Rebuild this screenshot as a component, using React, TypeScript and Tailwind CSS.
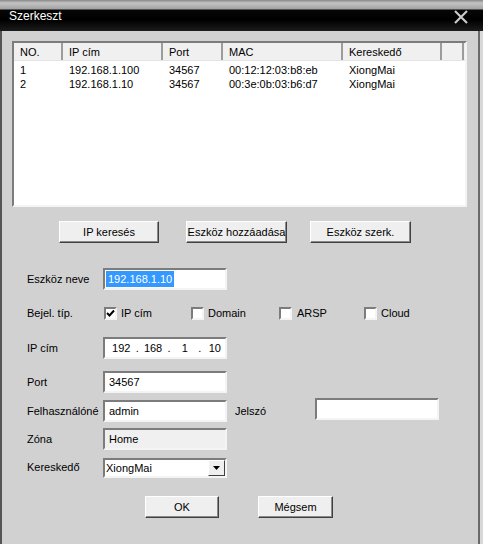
import React from "react";

const sunken =
  "border-2 border-t-[#7c7c7c] border-l-[#7c7c7c] border-b-[#f4f4f4] border-r-[#f4f4f4]";

function Btn({ label, w, ml }: { label: string; w: string; ml: string }) {
  return (
    <div
      className={`${w} ${ml} h-[22px] flex items-center justify-center bg-[#efefef] border border-t-white border-l-white border-b-[#404040] border-r-[#404040] shadow-[inset_-1px_-1px_0_#8a8a8a]`}
    >
      {label}
    </div>
  );
}

function Check({ checked }: { checked?: boolean }) {
  return (
    <div className={`w-[13px] h-[13px] bg-white ${sunken} flex items-center justify-center`}>
      {checked && (
        <svg width="9" height="9" viewBox="0 0 9 9">
          <polyline points="1,4 3.5,6.5 8,1.5" fill="none" stroke="#000" strokeWidth="2" />
        </svg>
      )}
    </div>
  );
}

const cols = [
  { t: "NO.", w: "w-[49px]" },
  { t: "IP cím", w: "w-[100px]" },
  { t: "Port", w: "w-[60px]" },
  { t: "MAC", w: "w-[120px]" },
  { t: "Kereskedő", w: "w-[99px]" },
];

const rows = [
  ["1", "192.168.1.100", "34567", "00:12:12:03:b8:eb", "XiongMai"],
  ["2", "192.168.1.10", "34567", "00:3e:0b:03:b6:d7", "XiongMai"],
];

export default function App() {
  return (
    <div className="w-[483px] h-[544px] overflow-hidden bg-[#d8d8d8] text-[11px] leading-[14px] text-black font-['Liberation_Sans',Arial,sans-serif]">
      {/* Title bar */}
      <div className="h-[31px] flex items-start justify-between bg-[linear-gradient(to_bottom,#8a8a8a_0px,#c4c4c4_3px,#a2a2a2_9px,#060606_10px,#000000_20px,#1c1c1c_31px)]">
        <span className="pl-[9px] pt-[10px] text-white text-[12px] leading-[12px]">Szerkeszt</span>
        <svg width="14" height="14" viewBox="0 0 14 14" className="mt-[10px] mr-[15px]">
          <path d="M1 1 L13 13 M13 1 L1 13" stroke="#c9c9c9" strokeWidth="2.2" />
        </svg>
      </div>

      {/* Body */}
      <div className="flex h-[513px]">
        <div className="w-[480px] h-full bg-[#d1d1d1] border-l-2 border-r-2 border-l-[#555555] border-r-[#6a6a6a] flex flex-col">
          {/* List */}
          <div className={`ml-[10px] mt-[10px] w-[455px] h-[166px] bg-white ${sunken} flex flex-col`}>
            <div className="h-[18px] flex bg-[#f0f0f0] border-b border-b-[#e4e4e4]">
              {cols.map((c) => (
                <div
                  key={c.t}
                  className={`${c.w} h-full flex items-center pl-[6px] border-r-2 border-r-[#9c9c9c]`}
                >
                  {c.t}
                </div>
              ))}
              <div className="w-[22px] h-full border-r-2 border-r-[#9c9c9c]" />
            </div>
            <div className="pt-[2px]">
              {rows.map((r) => (
                <div key={r[0]} className="h-[14px] flex">
                  {r.map((v, i) => (
                    <div key={i} className={`${cols[i].w} pl-[6px] ${i === 0 ? "pl-[5px]" : ""}`}>
                      {v}
                    </div>
                  ))}
                </div>
              ))}
            </div>
          </div>

          {/* Buttons */}
          <div className="flex mt-[14px]">
            <Btn label="IP keresés" w="w-[100px]" ml="ml-[57px]" />
            <Btn label="Eszköz hozzáadása" w="w-[101px]" ml="ml-[27px]" />
            <Btn label="Eszköz szerk." w="w-[101px]" ml="ml-[23px]" />
          </div>

          {/* Form */}
          <div className="pl-[25px] flex flex-col">
            <div className="mt-[25px] h-[22px] flex items-center">
              <div className="w-[76px]">Eszköz neve</div>
              <div className={`w-[124px] h-[22px] bg-white ${sunken} flex items-center pl-[1px]`}>
                <span className="bg-[#3399ff] text-white px-[2px] leading-[16px]">192.168.1.10</span>
              </div>
            </div>

            <div className="mt-[12px] h-[22px] flex items-center">
              <div className="w-[77px]">Bejel. típ.</div>
              <div className="w-[87px] flex items-center gap-[4px]">
                <Check checked />
                <span>IP cím</span>
              </div>
              <div className="w-[88px] flex items-center gap-[4px]">
                <Check />
                <span>Domain</span>
              </div>
              <div className="w-[85px] flex items-center gap-[5px]">
                <Check />
                <span>ARSP</span>
              </div>
              <div className="flex items-center gap-[4px]">
                <Check />
                <span>Cloud</span>
              </div>
            </div>

            <div className="mt-[13px] h-[22px] flex items-center">
              <div className="w-[76px]">IP cím</div>
              <div className={`w-[124px] h-[22px] bg-white ${sunken} flex items-center pl-[6px]`}>
                <span className="w-[22px] text-center">192</span>
                <span className="w-[12px] text-center">.</span>
                <span className="w-[22px] text-center">168</span>
                <span className="w-[12px] text-center">.</span>
                <span className="w-[22px] text-center">1</span>
                <span className="w-[10px] text-center">.</span>
                <span className="w-[22px] text-center">10</span>
              </div>
            </div>

            <div className="mt-[12px] h-[22px] flex items-center">
              <div className="w-[76px]">Port</div>
              <div className={`w-[124px] h-[22px] bg-white ${sunken} flex items-center pl-[4px]`}>34567</div>
            </div>

            <div className="mt-[7px] h-[22px] flex items-start">
              <div className="w-[76px] self-center">Felhasználóné</div>
              <div className={`w-[124px] h-[22px] bg-white ${sunken} flex items-center pl-[4px]`}>admin</div>
              <div className="ml-[8px] w-[80px] self-center">Jelszó</div>
              <div className={`w-[124px] h-[22px] -mt-[2px] bg-white ${sunken}`} />
            </div>

            <div className="mt-[6px] h-[22px] flex items-center">
              <div className="w-[76px]">Zóna</div>
              <div className={`w-[124px] h-[22px] bg-[#f0f0f0] ${sunken} flex items-center pl-[4px]`}>Home</div>
            </div>

            <div className="mt-[8px] h-[20px] flex items-center">
              <div className="w-[76px] -mt-[3px]">Kereskedő</div>
              <div className={`w-[124px] h-[20px] bg-white ${sunken} flex items-center justify-between`}>
                <span className="pl-[1px]">XiongMai</span>
                <div className="w-[17px] h-[16px] bg-[#efefef] border border-t-white border-l-white border-b-[#404040] border-r-[#404040] flex items-center justify-center">
                  <svg width="7" height="4" viewBox="0 0 7 4">
                    <path d="M0 0 H7 L3.5 4 Z" fill="#000" />
                  </svg>
                </div>
              </div>
            </div>

            <div className="mt-[18px] flex">
              <Btn label="OK" w="w-[74px]" ml="ml-[118px]" />
              <Btn label="Mégsem" w="w-[75px]" ml="ml-[39px]" />
            </div>
          </div>
        </div>
        <div className="flex-1 bg-[#d8d8d8]" />
      </div>
    </div>
  );
}
